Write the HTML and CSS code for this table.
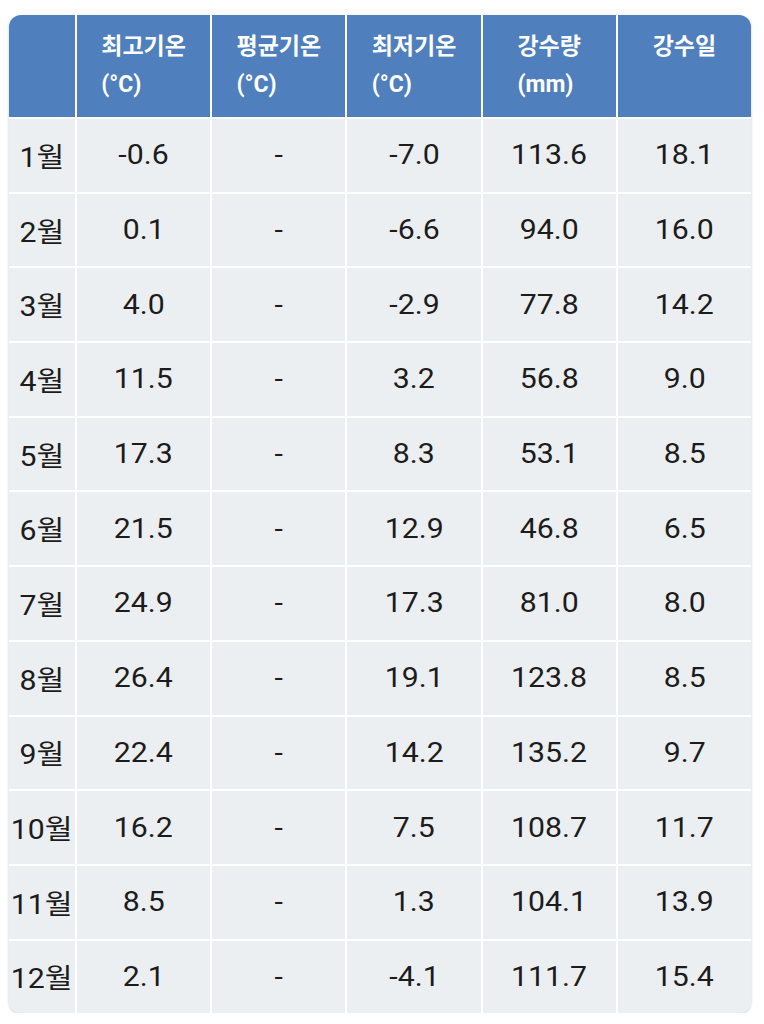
FILE: index.html
```html
<!DOCTYPE html>
<html lang="ko">
<head>
<meta charset="utf-8">
<title>월별 기후</title>
<link rel="stylesheet" href="styles.css">
</head>
<body>
<div class="page">
  <div class="climate">
    <div class="hcell"></div>
    <div class="hcell"><span class="htext">최고기온<br>(°C)</span></div>
    <div class="hcell"><span class="htext">평균기온<br>(°C)</span></div>
    <div class="hcell"><span class="htext">최저기온<br>(°C)</span></div>
    <div class="hcell"><span class="htext">강수량<br>(mm)</span></div>
    <div class="hcell"><span class="htext">강수일</span></div>

    <div class="cell"><span class="v">1월</span></div><div class="cell"><span class="v">-0.6</span></div><div class="cell"><span class="v">-</span></div><div class="cell"><span class="v">-7.0</span></div><div class="cell"><span class="v">113.6</span></div><div class="cell"><span class="v">18.1</span></div>
    <div class="cell"><span class="v">2월</span></div><div class="cell"><span class="v">0.1</span></div><div class="cell"><span class="v">-</span></div><div class="cell"><span class="v">-6.6</span></div><div class="cell"><span class="v">94.0</span></div><div class="cell"><span class="v">16.0</span></div>
    <div class="cell"><span class="v">3월</span></div><div class="cell"><span class="v">4.0</span></div><div class="cell"><span class="v">-</span></div><div class="cell"><span class="v">-2.9</span></div><div class="cell"><span class="v">77.8</span></div><div class="cell"><span class="v">14.2</span></div>
    <div class="cell"><span class="v">4월</span></div><div class="cell"><span class="v">11.5</span></div><div class="cell"><span class="v">-</span></div><div class="cell"><span class="v">3.2</span></div><div class="cell"><span class="v">56.8</span></div><div class="cell"><span class="v">9.0</span></div>
    <div class="cell"><span class="v">5월</span></div><div class="cell"><span class="v">17.3</span></div><div class="cell"><span class="v">-</span></div><div class="cell"><span class="v">8.3</span></div><div class="cell"><span class="v">53.1</span></div><div class="cell"><span class="v">8.5</span></div>
    <div class="cell"><span class="v">6월</span></div><div class="cell"><span class="v">21.5</span></div><div class="cell"><span class="v">-</span></div><div class="cell"><span class="v">12.9</span></div><div class="cell"><span class="v">46.8</span></div><div class="cell"><span class="v">6.5</span></div>
    <div class="cell"><span class="v">7월</span></div><div class="cell"><span class="v">24.9</span></div><div class="cell"><span class="v">-</span></div><div class="cell"><span class="v">17.3</span></div><div class="cell"><span class="v">81.0</span></div><div class="cell"><span class="v">8.0</span></div>
    <div class="cell"><span class="v">8월</span></div><div class="cell"><span class="v">26.4</span></div><div class="cell"><span class="v">-</span></div><div class="cell"><span class="v">19.1</span></div><div class="cell"><span class="v">123.8</span></div><div class="cell"><span class="v">8.5</span></div>
    <div class="cell"><span class="v">9월</span></div><div class="cell"><span class="v">22.4</span></div><div class="cell"><span class="v">-</span></div><div class="cell"><span class="v">14.2</span></div><div class="cell"><span class="v">135.2</span></div><div class="cell"><span class="v">9.7</span></div>
    <div class="cell"><span class="v">10월</span></div><div class="cell"><span class="v">16.2</span></div><div class="cell"><span class="v">-</span></div><div class="cell"><span class="v">7.5</span></div><div class="cell"><span class="v">108.7</span></div><div class="cell"><span class="v">11.7</span></div>
    <div class="cell"><span class="v">11월</span></div><div class="cell"><span class="v">8.5</span></div><div class="cell"><span class="v">-</span></div><div class="cell"><span class="v">1.3</span></div><div class="cell"><span class="v">104.1</span></div><div class="cell"><span class="v">13.9</span></div>
    <div class="cell"><span class="v">12월</span></div><div class="cell"><span class="v">2.1</span></div><div class="cell"><span class="v">-</span></div><div class="cell"><span class="v">-4.1</span></div><div class="cell"><span class="v">111.7</span></div><div class="cell"><span class="v">15.4</span></div>
  </div>
</div>
</body>
</html>
```
FILE: styles.css
```css
html, body {
  margin: 0;
  padding: 0;
  background: #ffffff;
}

.page {
  padding: 15px 0 0 9px;
}

.climate {
  width: 742px;
  display: grid;
  grid-template-columns: 66px repeat(5, 1fr);
  grid-template-rows: 102px;
  grid-auto-rows: 72.7px;
  gap: 2px;
  background: #ffffff;
  border-radius: 12px;
  overflow: hidden;
  box-shadow: 0 1px 3px rgba(0, 0, 0, 0.22);
  font-family: Roboto, "Noto Sans CJK KR", sans-serif;
}

.hcell {
  background: #4f7fbd;
  color: #ffffff;
  font-weight: 700;
  font-size: 23px;
  line-height: 38px;
  text-align: center;
  padding-top: 13px;
  box-sizing: border-box;
}

.htext {
  display: inline-block;
  text-align: left;
}

.cell {
  background: #eceff2;
  color: #1c1c1c;
  font-size: 27px;
  display: flex;
  align-items: center;
  justify-content: center;
}

.v {
  display: inline-block;
  transform: scaleX(1.12);
  white-space: nowrap;
}
```
